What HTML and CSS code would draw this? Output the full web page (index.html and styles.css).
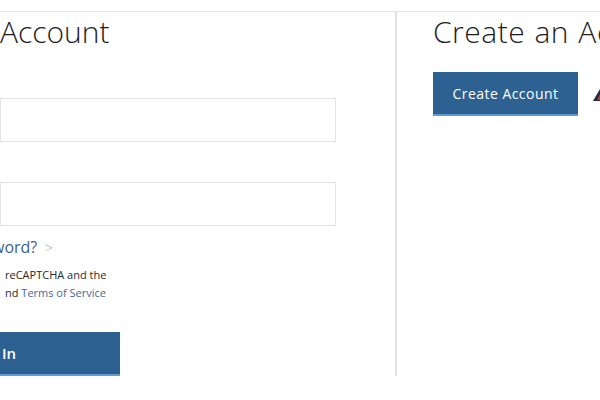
FILE: index.html
```html
<!DOCTYPE html>
<html>
<head>
<meta charset="utf-8">
<link rel="stylesheet" href="styles.css">
</head>
<body>
<div class="page">
  <div class="columns">
    <section class="col-left">
      <h1 class="title">Account</h1>
      <div class="field first"><input class="input" type="text"></div>
      <div class="field"><input class="input" type="password"></div>
      <a class="forgot" href="#">word? <span class="chev">&gt;</span></a>
      <p class="legal">reCAPTCHA and the<br>nd <a href="#" class="legal-link">Terms of Service</a></p>
      <button class="btn btn-signin">In</button>
    </section>
    <section class="col-right">
      <h1 class="title title-create">Create an Account</h1>
      <div class="create-row">
        <button class="btn btn-create">Create Account</button>
        <svg class="pointer" width="12" height="14" viewBox="0 0 12 14"><polygon points="7,0 0,12 12,12" fill="#1f2a44"/><polygon points="7,5 4,11 10,11" fill="#d2322d"/></svg>
      </div>
    </section>
  </div>
</div>
</body>
</html>
```
FILE: styles.css
```css
html, body {
  margin: 0;
  padding: 0;
  background: #fff;
  overflow: hidden;
}
body {
  font-family: "Open Sans", "Noto Sans", sans-serif;
  color: #222;
  width: 600px;
  height: 400px;
}
.page {
  margin-top: 11px;
  border-top: 1px solid #e6e6e6;
}
.columns {
  display: flex;
  align-items: flex-start;
}
.col-left {
  width: 336px;
  flex: 0 0 336px;
  padding: 2px 59px 0 0;
  border-right: 2px solid #e2e2e2;
  display: flex;
  flex-direction: column;
  overflow: hidden;
}
.col-right {
  padding: 2px 0 0 36px;
  white-space: nowrap;
}
.title {
  margin: 0;
  font-size: 30px;
  line-height: 36px;
  font-weight: 300;
  color: #1e1e1e;
  white-space: nowrap;
}
.title-create {
  word-spacing: 1px;
  letter-spacing: 0.5px;
}
.field {
  margin-top: 40px;
}
.field.first {
  margin-top: 48px;
}
.input {
  display: block;
  box-sizing: border-box;
  width: 336px;
  height: 44px;
  margin: 0;
  border: 1px solid #e3e3e3;
  background: #fff;
}
.forgot {
  margin: 10px 0 0 -8px;
  font-size: 16px;
  line-height: 22px;
  color: #3f5f88;
  text-decoration: none;
}
.chev {
  color: #a3abb4;
  margin-left: 3px;
  font-size: 15px;
  font-weight: 300;
}
.legal {
  margin: 8px 0 0 5px;
  font-size: 11px;
  line-height: 18px;
  color: #2a2a2a;
}
.legal-link {
  color: #3e6a9e;
  text-decoration: none;
}
.btn {
  font-family: "Open Sans", "Noto Sans", sans-serif;
  box-sizing: border-box;
  height: 44px;
  border: none;
  border-bottom: 2px solid #5f9ad0;
  background: #2d6191;
  color: #fff;
  font-size: 14px;
  font-weight: 600;
  cursor: pointer;
}
.btn-signin {
  margin-top: 30px;
  width: 120px;
  text-align: left;
  padding: 0 0 0 2px;
  font-size: 15px;
}
.create-row {
  margin-top: 22px;
  display: flex;
  align-items: center;
  gap: 15px;
}
.btn-create {
  width: 145px;
  padding: 0;
  font-weight: 500;
  letter-spacing: 0.45px;
}
.pointer {
  display: block;
  margin-top: 4px;
}
```
